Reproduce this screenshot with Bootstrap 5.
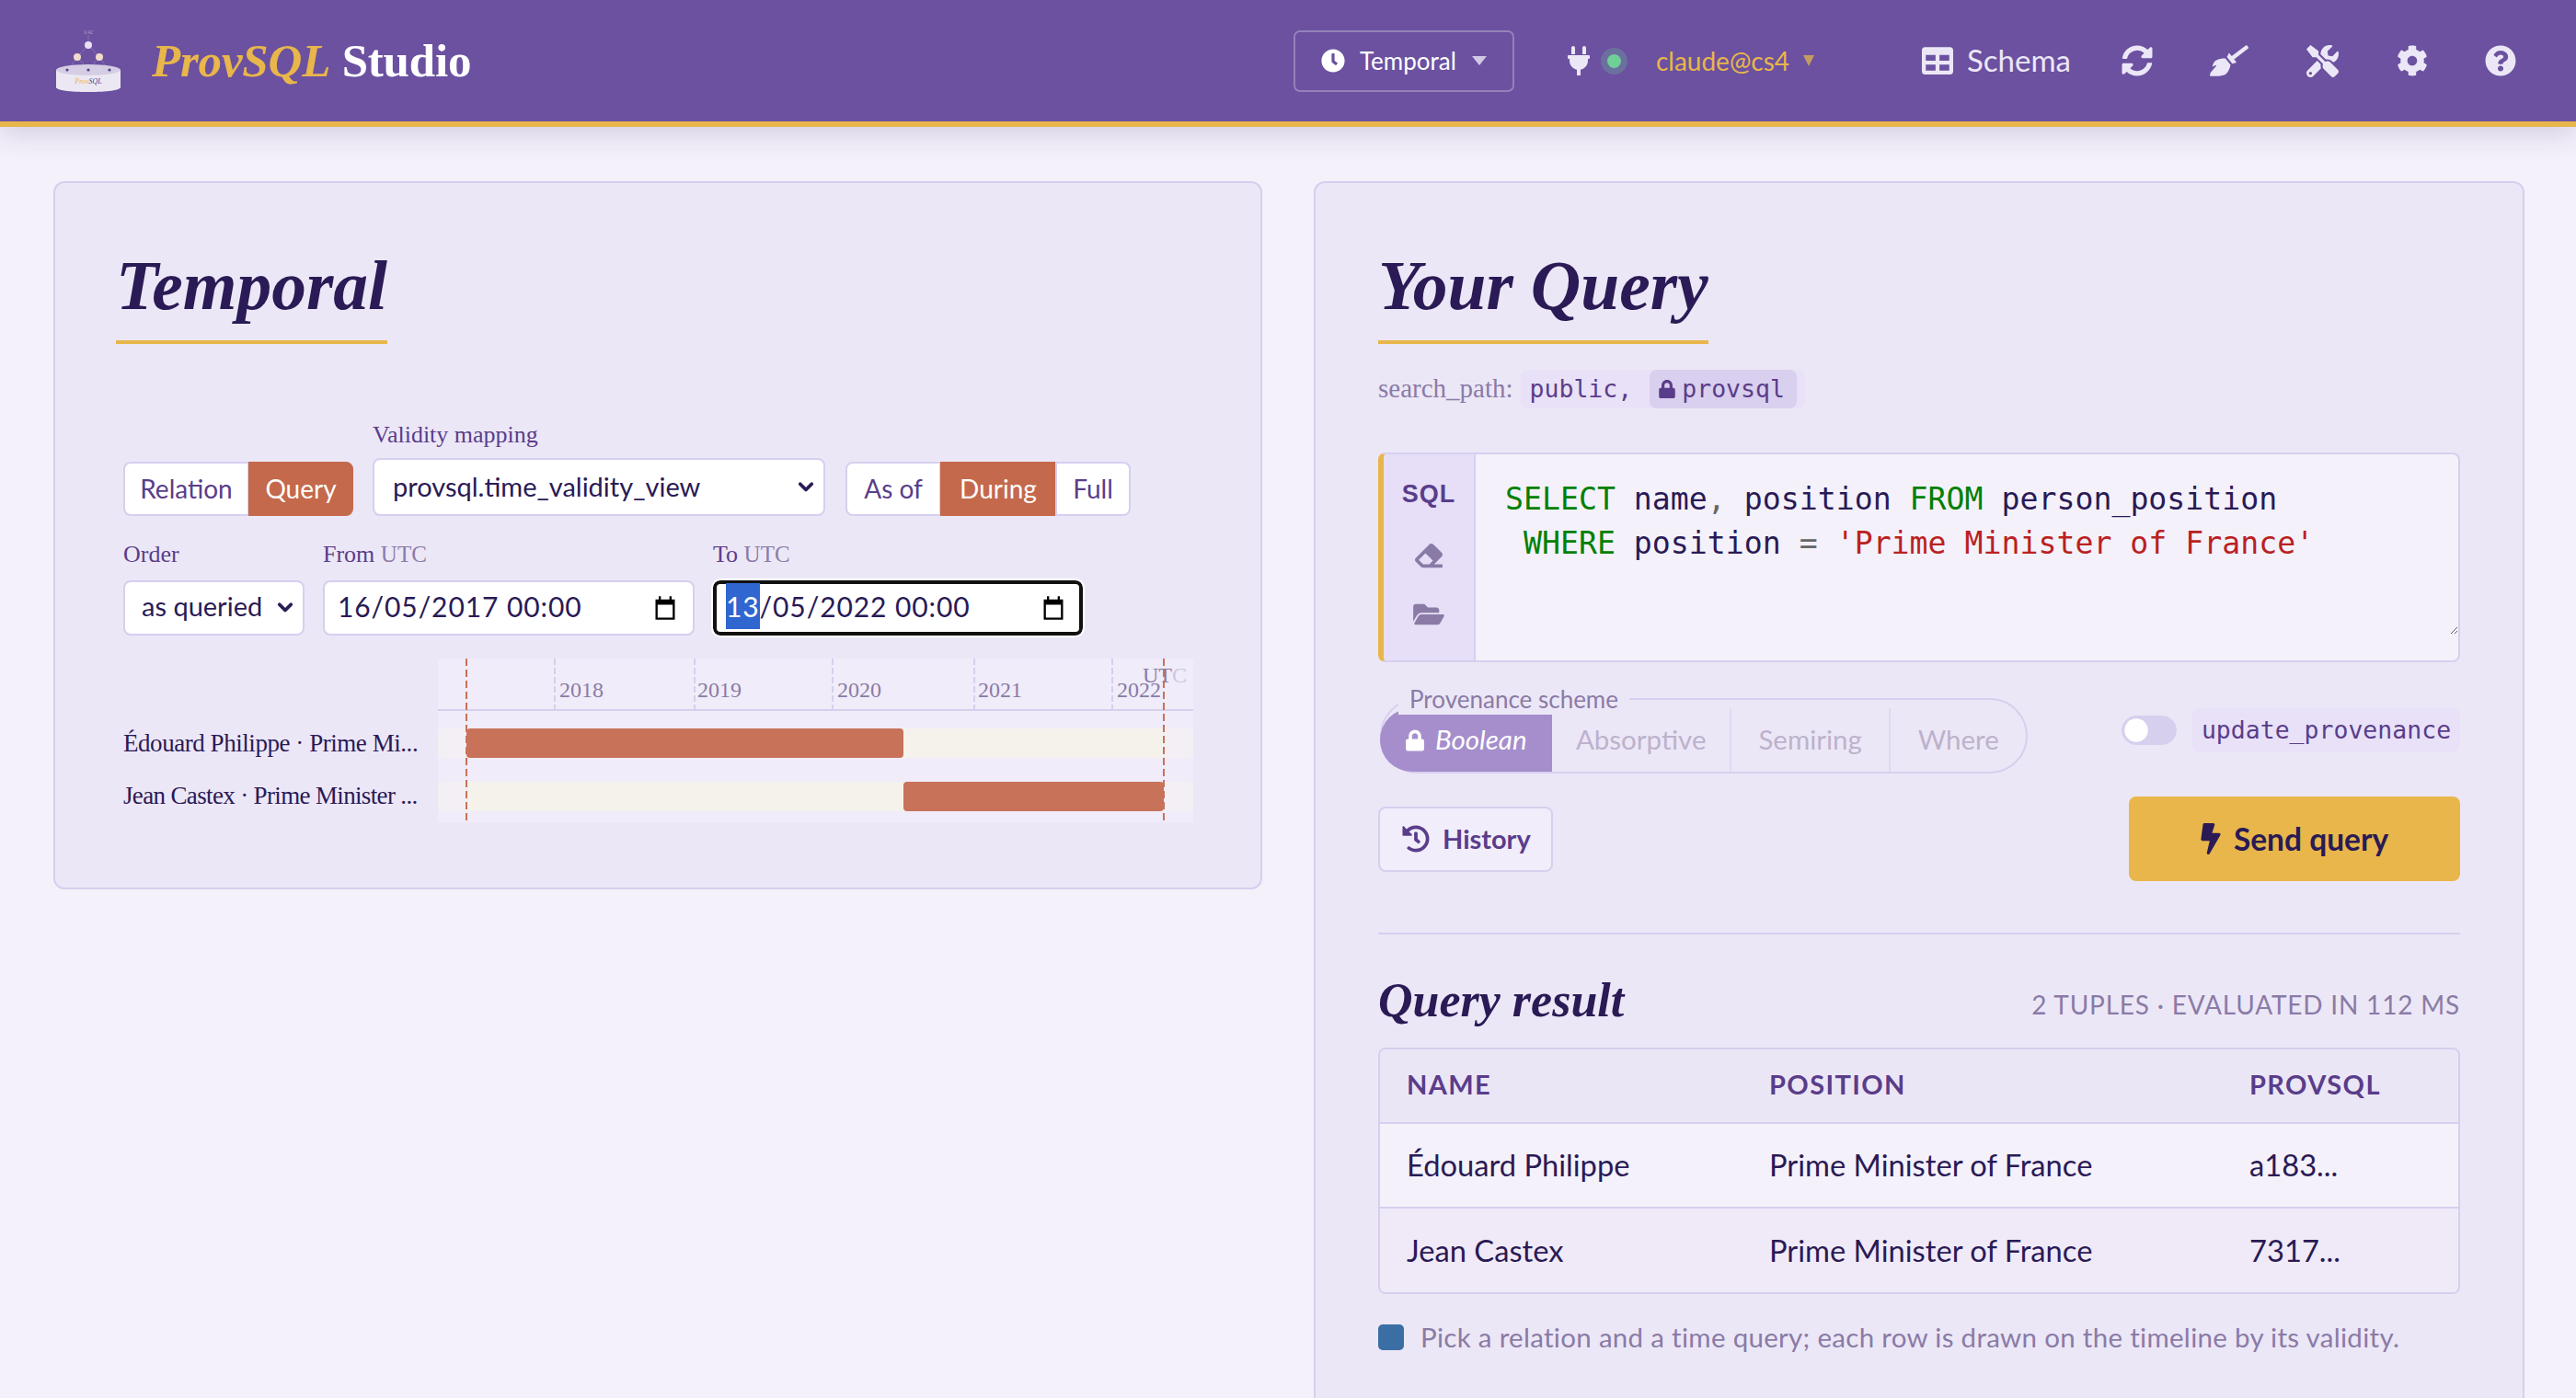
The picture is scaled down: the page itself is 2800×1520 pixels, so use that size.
<!DOCTYPE html>
<html lang="en">
<head>
    <meta charset="UTF-8">
    <title>ProvSQL Studio</title>
    <link href="https://cdn.jsdelivr.net/npm/bootstrap@5.3.3/dist/css/bootstrap.min.css" rel="stylesheet">
    <style>
        :root { --ink: #2a1a55; --accent: #5a3d8a; --muted: #8a7ba6; --line: #d6cfee; --gold: #e8b64a; --terra: #c4694b; --panel: #ece7f7; }
        html, body { height: 100%; }
        body { background: #f4f1fb; color: var(--ink); font-family: Lato, "Liberation Sans", sans-serif; font-size: 32px; overflow: hidden; }
        .code-font { font-family: "DejaVu Sans Mono", monospace; }
        .ico { fill: currentColor; display: block; flex: none; }

        .topbar { height: 138px; background: #6b51a0; border-bottom: 6px solid var(--gold); box-shadow: 0 6px 30px rgba(42,26,85,.18); padding: 0 65px 0 61px; flex-wrap: nowrap; color: #ece7f7; position: relative; }
        .brand-name { font-family: "Liberation Serif", serif; font-size: 51px; font-weight: 700; color: #fff; margin: 0 0 0 34px; line-height: 1; letter-spacing: -.2px; }
        .brand-name em { color: var(--gold); }
        .mode-btn { width: 240px; height: 67px; border: 2px solid rgba(255,255,255,.28); border-radius: 7px; color: #fff; font-size: 26px; padding: 0 28px; gap: 16px; }
        .mode-btn:hover, .mode-btn:active { color: #fff; border-color: rgba(255,255,255,.28); }
        .caret-down { width: 0; height: 0; border-left: 8px solid transparent; border-right: 8px solid transparent; border-top: 10px solid rgba(236,231,247,.8); margin-left: auto; }
        .conn { margin-left: 58px; }
        .live-dot { width: 15px; height: 15px; border-radius: 50%; background: #6fcf97; box-shadow: 0 0 0 7px rgba(111,207,151,.25); margin: 0 0 0 19px; }
        .who { color: var(--gold); font-size: 28px; margin-left: 38px; }
        .who + .caret-down { border-left-width: 6px; border-right-width: 6px; border-top: 12px solid #c49c5f; margin-left: 15px; }
        .schema-link { margin-left: 117px; font-size: 33px; gap: 15px; color: #ece7f7; }
        .tool-ico { color: #ece7f7; }
        .t1 { margin-left: 55px; } .t2 { margin-left: 62px; } .t3 { margin-left: 63px; } .t4 { margin-left: 63px; } .t5 { margin-left: 62px; }

        .workspace { display: grid; grid-template-columns: 1314px 1316px; gap: 56px; padding: 59px 0 0 58px; align-items: start; height: 1382px; overflow: hidden; }
        .panel-box { background: var(--panel); border: 2px solid var(--line); border-radius: 12px; padding: 0 68px; }
        .panel-left { height: 770px; padding-left: 66px; }
        .panel-right { height: 1400px; }
        .panel-title { display: block; width: fit-content; font-family: "Liberation Serif", serif; font-style: italic; font-weight: 700; font-size: 75.5px; line-height: 82px; margin: 71px 0 0; padding: 0 0 18px; border-bottom: 4px solid var(--gold); color: var(--ink); }

        .field-row { display: flex; align-items: flex-end; gap: 20px; margin-left: 8px; }
        .field-row.first { margin-top: 84px; }
        .field-row.second { margin-top: 27px; }
        .field-label { display: block; font-family: "Liberation Serif", serif; font-size: 26px; line-height: 30px; color: var(--accent); margin: 0 0 10px; }
        .field-label.low { margin-bottom: 13px; }
        .field-label span { color: var(--muted); font-size: 25px; }
        .seg-group .btn { background: #fff; border: 2px solid var(--line); color: var(--accent); font-size: 28px; height: 59px; padding: 0; line-height: 55px; white-space: nowrap; --bs-btn-border-radius: 8px; }
        .seg-group .btn.on { background: var(--terra); border-color: var(--terra); color: #fff; }
        .seg-a { width: 251px; } .seg-b { width: 312px; margin-left: 2px; }
        .seg-a .b1 { width: 137px; flex: none; } .seg-a .b2 { width: 114px; flex: none; }
        .seg-b .b1 { width: 104px; flex: none; } .seg-b .b2 { width: 126px; flex: none; } .seg-b .b3 { width: 82px; flex: none; }
        .pick { border: 2px solid var(--line); border-radius: 8px; color: var(--ink); font-size: 29px; height: 63px; padding: 0 40px 2px 20px; background-size: 28px 20px; background-position: right 5px center; --bs-form-select-bg-img: url("data:image/svg+xml,%3csvg xmlns='http://www.w3.org/2000/svg' viewBox='0 0 16 16'%3e%3cpath fill='none' stroke='%232a1a55' stroke-linecap='round' stroke-linejoin='round' stroke-width='3' d='m3 5 5 5 5-5'/%3e%3c/svg%3e"); }
        .pick-view { width: 492px; }
        .pick-order { width: 197px; height: 60px; padding: 0 30px 4px 18px; }
        .date-box { height: 60px; background: #fff; border: 2px solid var(--line); border-radius: 8px; color: var(--ink); font-size: 30px; padding: 0 16px 0 14px; display: flex; align-items: center; justify-content: space-between; letter-spacing: .9px; }
        .date-box span { margin-bottom: 4px; }
        .date-from { width: 404px; }
        .date-to { width: 402px; border: 4px solid #111; outline: 2px solid #fff; padding: 0 14px 0 10px; }
        .date-to mark { background: #2f66cf; color: #fff; padding: 7px 0; }
        .timeline { display: block; margin: 25px 0 0 8px; }

        .path-row { margin-top: 28px; height: 42px; }
        .path-label { font-family: "Liberation Serif", serif; font-size: 29px; color: var(--muted); margin-right: 8px; }
        .path-chip { height: 42px; width: 309px; background: #e8e1f8; border-radius: 8px; font-size: 26.5px; color: var(--accent); padding: 0 9px 0 10px; }
        .path-lock { background: #d9cfee; border-radius: 8px; height: 42px; padding: 0 12px 0 10px; gap: 7px; margin-left: 19px; width: 162px; }
        .editor { margin-top: 48px; height: 228px; border: 2px solid var(--line); border-left: 6px solid var(--gold); border-radius: 8px; overflow: hidden; background: #f4f1fb; }
        .editor-side { width: 100px; flex: none; background: #e6dff7; border-right: 2px solid var(--line); color: var(--muted); padding-top: 25px; gap: 34px; }
        .editor-side b { color: var(--accent); font-size: 27px; line-height: 36px; letter-spacing: 1px; font-family: "Liberation Sans", sans-serif; }
        .editor-code { flex: 1; align-self: flex-start; height: 196px; margin: 0; padding: 25px 0 0 32px; font-family: "DejaVu Sans Mono", monospace; font-size: 33.2px; line-height: 48px; color: var(--ink); resize: vertical; overflow: auto; }
        .kw { color: #008000; } .str { color: #ba2121; } .op { color: #666; }

        .scheme-row { margin-top: 39px; }
        .scheme-box { position: relative; width: 704px; height: 82px; border: 2px solid var(--line); border-radius: 41px; padding-top: 9px; margin: 0 0 0 2px; }
        .scheme-legend { position: absolute; left: 18px; top: -18px; float: none; width: auto; background: var(--panel); font-size: 26px; line-height: 34px; color: var(--muted); padding: 0 12px; margin: 0; }
        .scheme-opts { height: 69px; margin: 0 0 -2px -2px; }
        .scheme-opt { height: 69px; border-right: 2px solid #e0d9f1; color: #bdb2cc; font-size: 29.5px; gap: 12px; }
        .scheme-opt.picked { background: #a58ecb; color: #fff; font-style: italic; border: 0; border-radius: 38px 0 0 38px; width: 188px; }
        .w2 { width: 195px; } .w3 { width: 174px; } .w4 { width: 147px; border: 0; }
        .prov-flag { margin-top: 11px; height: 48px; }
        .prov-switch { padding: 0; margin: 0 17px 0 0; min-height: 0; height: 32px; }
        .form-switch .prov-toggle { width: 60px; height: 32px; margin: 0; background-color: var(--line); border-color: var(--line); background-image: url("data:image/svg+xml,%3csvg xmlns='http://www.w3.org/2000/svg' viewBox='-4 -4 8 8'%3e%3ccircle r='3.4' fill='%23fff'/%3e%3c/svg%3e"); }
        .prov-chip { background: #e8e1f8; color: var(--accent); border-radius: 8px; height: 48px; width: 291px; font-size: 26.5px; line-height: 48px; text-align: center; }

        .action-row { margin-top: 25px; height: 92px; }
        .history-btn { height: 71px; width: 190px; border: 2px solid var(--line); border-radius: 8px; color: var(--accent); font-weight: 700; font-size: 29px; gap: 14px; padding: 0 0 0 24px; justify-content: flex-start; background: #f1edfb; }
        .send-btn { width: 360px; height: 92px; background: var(--gold); border: 0; border-radius: 8px; color: var(--ink); font-weight: 700; font-size: 33.5px; gap: 14px; justify-content: center; }
        .soft-rule { margin: 56px 0 0; border-top: 2px solid var(--line); opacity: 1; }
        .result-head { margin-top: 40px; margin-bottom: 19px; height: 64px; }
        .result-title { font-family: "Liberation Serif", serif; font-style: italic; font-weight: 700; font-size: 52px; line-height: 64px; margin: 0; color: var(--ink); }
        .result-meta { color: var(--muted); font-size: 28px; letter-spacing: .8px; padding-top: 8px; }
        .result-wrap { border: 2px solid var(--line); border-radius: 8px; overflow: hidden; }
        .result-table { table-layout: fixed; margin: 0; font-size: 32.7px; --bs-table-bg: transparent; --bs-table-color: var(--ink); }
        .result-table th { height: 80px; vertical-align: middle; padding: 0 0 3px 29px; color: var(--accent); font-size: 29px; font-weight: 700; letter-spacing: 1.4px; text-transform: uppercase; background: #ebe6f6; border-bottom: 2px solid var(--line); }
        .result-table td { height: 92px; vertical-align: middle; padding: 0 0 0 29px; border-bottom: 2px solid var(--line); }
        .result-table tr:last-child td { border-bottom: 0; }
        .row-a td { background: #f4f1fb; } .row-b td { background: #f0eaf8; }
        .c1 { width: 394px; } .c2 { width: 522px; }
        .note-row { margin-top: 25px; gap: 18px; color: var(--muted); font-size: 29.5px; letter-spacing: .3px; }
        .note-dot { width: 28px; height: 28px; background: #3a6ea5; border-radius: 5px; }
    </style>
</head>
<body>

<svg class="d-none">
    <symbol id="i-clock" viewBox="0 0 512 512"><path d="M256,8C119,8,8,119,8,256S119,504,256,504,504,393,504,256,393,8,256,8Zm92.49,313h0l-20,25a16,16,0,0,1-22.49,2.5h0l-67-49.72a40,40,0,0,1-15-31.23V112a16,16,0,0,1,16-16h32a16,16,0,0,1,16,16V256l58,42.5A16,16,0,0,1,348.49,321Z"/></symbol>
    <symbol id="i-lock" viewBox="0 0 448 512"><path d="M400 224h-24v-72C376 68.2 307.8 0 224 0S72 68.2 72 152v72H48c-26.5 0-48 21.5-48 48v192c0 26.5 21.5 48 48 48h352c26.5 0 48-21.5 48-48V272c0-26.5-21.5-48-48-48zm-104 0H152v-72c0-39.7 32.3-72 72-72s72 32.3 72 72v72z"/></symbol>
    <symbol id="i-bolt" viewBox="0 0 320 512"><path d="M296 160H180.6l42.6-129.8C227.2 15 215.7 0 200 0H56C44 0 33.8 8.9 32.2 20.8l-32 240C-1.7 275.2 9.5 288 24 288h118.7L96.6 482.5c-3.6 15.2 8 29.5 23.3 29.5 8.4 0 16.4-4.4 20.8-12l176-304c9.3-15.9-2.2-36-20.7-36z"/></symbol>
    <symbol id="i-help" viewBox="0 0 512 512"><path d="M504 256c0 136.997-111.043 248-248 248S8 392.997 8 256C8 119.083 119.043 8 256 8s248 111.083 248 248zM262.655 90c-54.497 0-89.255 22.957-116.549 63.758-3.536 5.286-2.353 12.415 2.715 16.258l34.699 26.31c5.205 3.947 12.621 3.008 16.665-2.122 17.864-22.658 30.113-35.797 57.303-35.797 20.429 0 45.698 13.148 45.698 32.958 0 14.976-12.363 22.667-32.534 33.976C247.128 238.528 216 254.941 216 296v4c0 6.627 5.373 12 12 12h56c6.627 0 12-5.373 12-12v-1.333c0-28.462 83.186-29.647 83.186-106.667 0-58.002-60.165-102-116.531-102zM256 338c-25.365 0-46 20.635-46 46 0 25.364 20.635 46 46 46s46-20.636 46-46c0-25.365-20.635-46-46-46z"/></symbol>
    <symbol id="i-cog" viewBox="0 0 512 512"><path d="M487.4 315.7l-42.6-24.6c4.3-23.2 4.3-47 0-70.2l42.6-24.6c4.9-2.8 7.1-8.6 5.5-14-11.1-35.6-30-67.8-54.7-94.6-3.8-4.1-10-5.1-14.8-2.3L380.8 110c-17.9-15.4-38.5-27.3-60.8-35.1V25.8c0-5.6-3.9-10.5-9.4-11.7-36.7-8.2-74.3-7.8-109.2 0-5.5 1.2-9.4 6.1-9.4 11.7V75c-22.2 7.9-42.8 19.8-60.8 35.1L88.7 85.5c-4.9-2.8-11-1.9-14.8 2.3-24.7 26.7-43.6 58.9-54.7 94.6-1.7 5.4.6 11.2 5.5 14L67.3 221c-4.3 23.2-4.3 47 0 70.2l-42.6 24.6c-4.9 2.8-7.1 8.6-5.5 14 11.1 35.6 30 67.8 54.7 94.6 3.8 4.1 10 5.1 14.8 2.3l42.6-24.6c17.9 15.4 38.5 27.3 60.8 35.1v49.2c0 5.6 3.9 10.5 9.4 11.7 36.7 8.2 74.3 7.8 109.2 0 5.5-1.2 9.4-6.1 9.4-11.7v-49.2c22.2-7.9 42.8-19.8 60.8-35.1l42.6 24.6c4.9 2.8 11 1.9 14.8-2.3 24.7-26.7 43.6-58.9 54.7-94.6 1.5-5.5-.7-11.3-5.6-14.1zM256 336c-44.1 0-80-35.9-80-80s35.9-80 80-80 80 35.9 80 80-35.9 80-80 80z"/></symbol>
    <symbol id="i-sync" viewBox="0 0 512 512"><path d="M370.72 133.28C339.458 104.008 298.888 87.962 255.848 88c-77.458.068-144.328 53.178-162.791 126.85-1.344 5.363-6.122 9.15-11.651 9.15H24.103c-7.498 0-13.194-6.807-11.807-14.176C33.933 94.924 134.813 8 256 8c66.448 0 126.791 26.136 171.315 68.685L463.03 40.97C478.149 25.851 504 36.559 504 57.941V192c0 13.255-10.745 24-24 24H345.941c-21.382 0-32.09-25.851-16.971-40.971l41.75-41.749zM32 296h134.059c21.382 0 32.09 25.851 16.971 40.971l-41.75 41.75c31.262 29.273 71.835 45.319 114.876 45.28 77.418-.07 144.315-53.144 162.787-126.849 1.344-5.363 6.122-9.15 11.651-9.15h57.304c7.498 0 13.194 6.807 11.807 14.176C478.067 417.076 377.187 504 256 504c-66.448 0-126.791-26.136-171.315-68.685L48.97 471.03C33.851 486.149 8 475.441 8 454.059V320c0-13.255 10.745-24 24-24z"/></symbol>
    <symbol id="i-table" viewBox="0 0 512 512"><path d="M464 32H48C21.49 32 0 53.49 0 80v352c0 26.51 21.49 48 48 48h416c26.51 0 48-21.49 48-48V80c0-26.51-21.49-48-48-48zM224 416H64v-96h160v96zm0-160H64v-96h160v96zm224 160H288v-96h160v96zm0-160H288v-96h160v96z"/></symbol>
    <symbol id="i-plug" viewBox="0 0 384 512"><path d="M256 144V32c0-17.673 14.327-32 32-32s32 14.327 32 32v112h-64zm112 16H16c-8.837 0-16 7.163-16 16v32c0 8.837 7.163 16 16 16h16v32c0 77.406 54.969 141.971 128 156.796V512h64v-99.204c73.031-14.825 128-79.39 128-156.796v-32h16c8.837 0 16-7.163 16-16v-32c0-8.837-7.163-16-16-16zM128 144V32c0-17.673-14.327-32-32-32S64 14.327 64 32v112h64z"/></symbol>
    <symbol id="i-history" viewBox="0 0 512 512"><path d="M504 255.531c.253 136.64-111.18 248.372-247.82 248.468-59.015.042-113.223-20.53-155.822-54.911-11.077-8.94-11.905-25.541-1.839-35.607l11.267-11.267c8.609-8.609 22.353-9.551 31.891-1.984C173.062 425.135 212.781 440 256 440c101.705 0 184-82.311 184-184 0-101.705-82.311-184-184-184-48.814 0-93.149 18.969-126.068 49.932l50.754 50.754c10.08 10.08 2.941 27.314-11.313 27.314H24c-8.837 0-16-7.163-16-16V38.627c0-14.254 17.234-21.393 27.314-11.314l49.372 49.372C129.209 34.136 189.552 8 256 8c136.81 0 247.747 110.78 248 247.531zm-180.912 78.784l9.823-12.63c8.138-10.463 6.253-25.542-4.21-33.679L288 256.349V152c0-13.255-10.745-24-24-24h-16c-13.255 0-24 10.745-24 24v135.651l65.409 50.874c10.463 8.137 25.541 6.253 33.679-4.21z"/></symbol>
    <symbol id="i-eraser" viewBox="0 0 512 512"><path d="M497.941 273.941c18.745-18.745 18.745-49.137 0-67.882l-160-160c-18.745-18.745-49.136-18.746-67.883 0l-256 256c-18.745 18.745-18.745 49.137 0 67.882l96 96A48.004 48.004 0 0 0 144 480h356c6.627 0 12-5.373 12-12v-40c0-6.627-5.373-12-12-12H355.883l142.058-142.059zm-302.627-62.627l137.373 137.373L265.373 416H150.628l-80-80 124.686-124.686z"/></symbol>
    <symbol id="i-folder" viewBox="0 0 576 512"><path d="M572.694 292.093L500.27 416.248A63.997 63.997 0 0 1 444.989 448H45.025c-18.523 0-30.064-20.093-20.731-36.093l72.424-124.155A64 64 0 0 1 152 256h399.964c18.523 0 30.064 20.093 20.73 36.093zM152 224h328v-48c0-26.51-21.49-48-48-48H272l-64-64H48C21.49 64 0 85.49 0 112v278.046l69.077-118.418C86.214 242.25 117.989 224 152 224z"/></symbol>
    <symbol id="i-tools" viewBox="0 0 512 512"><path d="M501.1 395.7L384 278.6c-23.1-23.1-57.6-27.6-85.4-13.9L192 158.1V96L64 0 0 64l96 128h62.1l106.6 106.6c-13.6 27.8-9.2 62.3 13.9 85.4l117.1 117.1c14.6 14.6 38.2 14.6 52.7 0l52.7-52.7c14.5-14.6 14.5-38.2 0-52.7zM331.7 225c28.3 0 54.9 11 74.9 31l19.4 19.4c15.8-6.9 30.8-16.5 43.8-29.5 37.1-37.1 49.7-89.3 37.9-136.7-2.2-9-13.5-12.1-20.1-5.5l-74.4 74.4-67.9-11.3L334 98.9l74.4-74.4c6.6-6.6 3.4-17.9-5.7-20.2-47.4-11.7-99.6.9-136.6 37.9-28.5 28.5-41.9 66.1-41.2 103.6l82.1 82.1c8.1-1.9 16.5-2.9 24.7-2.9zm-103.9 82l-56.7-56.7L18.7 402.8c-25 25-25 65.5 0 90.5s65.5 25 90.5 0l123.6-123.6c-7.6-19.9-9.9-41.6-5-62.7zM64 472c-13.2 0-24-10.8-24-24 0-13.3 10.7-24 24-24s24 10.7 24 24c0 13.2-10.7 24-24 24z"/></symbol>
    <symbol id="i-broom" viewBox="0 0 640 512"><path d="M256.47 216.77l86.73 109.18s-16.6 102.36-76.57 150.12C206.66 523.85 0 510.19 0 510.19s3.8-23.14 11-55.43l94.62-112.17c3.97-4.7-.87-11.62-6.65-9.5l-60.4 22.09c14.44-41.66 32.72-80.04 54.6-97.47 59.97-47.76 163.3-40.94 163.3-40.94zM636.53 31.03l-19.86-25c-5.49-6.9-15.52-8.05-22.41-2.56l-232.48 177.8-34.14-42.97c-5.09-6.41-15.14-5.21-18.59 2.21l-25.33 54.55 86.73 109.18 58.8-12.45c8-1.69 11.42-11.2 6.34-17.6l-34.09-42.92 232.48-177.8c6.89-5.48 8.04-15.53 2.55-22.44z"/></symbol>
    <symbol id="i-cal" viewBox="0 0 24 24"><path d="M6 1h2v3h8V1h2v3h3v19H3V4h3V1zM5 9v12h14V9H5z"/></symbol>
</svg>

<nav class="navbar topbar">
    <div class="d-flex align-items-center">
        <svg width="70" height="68" viewBox="0 0 70 68">
            <text x="35" y="5" font-size="5" text-anchor="middle" fill="#b59bc4" font-family="Liberation Sans">0.42</text>
            <path d="M35 6v11M35 17 23 30M35 17l12 13M23 30l-10 14M23 30l12 14M47 30 35 44M47 30l10 14" stroke="#8f79b8" stroke-width=".8" fill="none"/>
            <circle cx="35" cy="17" r="4" fill="#e6e0f2"/>
            <circle cx="23" cy="30" r="4" fill="#f3dccb"/>
            <circle cx="47" cy="30" r="4" fill="#f3dccb"/>
            <path d="M0 47v19c0 3 15 5 35 5s35-2 35-5V47z" transform="translate(0 -3)" fill="#ece8f3"/>
            <ellipse cx="35" cy="44" rx="35" ry="6" fill="#d4cde4"/>
            <circle cx="12" cy="44" r="1.6" fill="#5a3d8a"/><circle cx="35" cy="44" r="1.6" fill="#5a3d8a"/><circle cx="58" cy="44" r="1.6" fill="#5a3d8a"/>
            <text x="35" y="59" font-size="8" text-anchor="middle" font-style="italic" fill="#5a3d8a" font-family="Liberation Serif"><tspan fill="#e8b64a">Prov</tspan>SQL</text>
        </svg>
        <p class="brand-name"><em>ProvSQL</em> Studio</p>
    </div>
    <div class="d-flex align-items-center ms-auto">
        <div class="dropdown">
            <button class="btn mode-btn d-flex align-items-center" type="button">
                <svg class="ico" width="26" height="26"><use href="#i-clock"/></svg>
                <span>Temporal</span>
                <span class="caret-down"></span>
            </button>
        </div>
        <div class="d-flex align-items-center conn">
            <svg class="ico" width="24" height="32"><use href="#i-plug"/></svg>
            <span class="live-dot"></span>
            <span class="who">claude@cs4</span>
            <span class="caret-down"></span>
        </div>
        <div class="d-flex align-items-center schema-link">
            <svg class="ico" width="34" height="34"><use href="#i-table"/></svg>
            <span>Schema</span>
        </div>
        <svg class="ico tool-ico t1" width="34" height="34"><use href="#i-sync"/></svg>
        <svg class="ico tool-ico t2" width="42" height="34"><use href="#i-broom"/></svg>
        <svg class="ico tool-ico t3" width="35" height="35"><use href="#i-tools"/></svg>
        <svg class="ico tool-ico t4" width="34" height="34"><use href="#i-cog"/></svg>
        <svg class="ico tool-ico t5" width="34" height="34"><use href="#i-help"/></svg>
    </div>
</nav>

<main class="workspace">
    <section class="panel-box panel-left">
        <h2 class="panel-title">Temporal</h2>

        <div class="field-row first">
            <div class="btn-group seg-group seg-a">
                <button class="btn b1" type="button">Relation</button>
                <button class="btn b2 on" type="button">Query</button>
            </div>
            <div>
                <label class="field-label">Validity mapping</label>
                <select class="form-select pick pick-view"><option>provsql.time_validity_view</option></select>
            </div>
            <div class="btn-group seg-group seg-b">
                <button class="btn b1" type="button">As of</button>
                <button class="btn b2 on" type="button">During</button>
                <button class="btn b3" type="button">Full</button>
            </div>
        </div>

        <div class="field-row second">
            <div>
                <label class="field-label low">Order</label>
                <select class="form-select pick pick-order"><option>as queried</option></select>
            </div>
            <div>
                <label class="field-label low">From <span>UTC</span></label>
                <div class="date-box date-from">
                    <span>16/05/2017 00:00</span>
                    <svg class="ico text-black" width="28" height="28"><use href="#i-cal"/></svg>
                </div>
            </div>
            <div>
                <label class="field-label low">To <span>UTC</span></label>
                <div class="date-box date-to">
                    <span><mark>13</mark>/05/2022 00:00</span>
                    <svg class="ico text-black" width="28" height="28"><use href="#i-cal"/></svg>
                </div>
            </div>
        </div>

        <svg class="timeline" width="1166" height="178" viewBox="0 0 1166 178" font-family="Liberation Serif, serif">
            <rect x="342" width="821" height="178" fill="#f0ecf9"/>
            <rect x="342" y="55" width="821" height="2" fill="#d6cfee"/>
            <g stroke="#d6cfee" stroke-width="2" stroke-dasharray="7 3">
                <path d="M469 0v55M621 0v55M771 0v55M925 0v55M1075 0v55"/>
            </g>
            <g font-size="24" fill="#8a7ba6">
                <text x="474" y="42">2018</text>
                <text x="624" y="42">2019</text>
                <text x="776" y="42">2020</text>
                <text x="929" y="42">2021</text>
                <text x="1080" y="42">2022</text>
                <text x="1108" y="26">UT<tspan fill="#cfc7df">C</tspan></text>
            </g>
            <g font-size="27" fill="#2a1a55">
                <text x="0" y="101" letter-spacing="-.45">Édouard Philippe · Prime Mi...</text>
                <text x="0" y="158" letter-spacing="-.65">Jean Castex · Prime Minister ...</text>
            </g>
            <rect x="342" y="76" width="821" height="32" rx="4" fill="#f3eff5"/>
            <rect x="342" y="134" width="821" height="32" rx="4" fill="#f3eff5"/>
            <rect x="373" y="76" width="758" height="32" fill="#f5f2ec"/>
            <rect x="373" y="134" width="758" height="32" fill="#f5f2ec"/>
            <rect x="373" y="76" width="475" height="32" rx="4" fill="#c8725a"/>
            <rect x="848" y="134" width="283" height="32" rx="4" fill="#c8725a"/>
            <path d="M373 0v178M1131 0v178" stroke="#c8725a" stroke-width="2" stroke-dasharray="8 4"/>
        </svg>
    </section>

    <section class="panel-box panel-right">
        <h2 class="panel-title">Your Query</h2>

        <div class="d-flex align-items-center path-row">
            <span class="path-label">search_path:</span>
            <span class="d-flex align-items-center code-font path-chip">
                <span>public,</span>
                <span class="d-flex align-items-center path-lock">
                    <svg class="ico" width="18" height="20"><use href="#i-lock"/></svg>
                    <span>provsql</span>
                </span>
            </span>
        </div>

        <div class="d-flex editor">
            <div class="d-flex flex-column align-items-center editor-side">
                <b>SQL</b>
                <svg class="ico" width="30" height="30"><use href="#i-eraser"/></svg>
                <svg class="ico" width="36" height="30"><use href="#i-folder"/></svg>
            </div>
            <pre class="editor-code"><span class="kw">SELECT</span> name<span class="op">,</span> position <span class="kw">FROM</span> person_position
 <span class="kw">WHERE</span> position <span class="op">=</span> <span class="str">'Prime Minister of France'</span></pre>
        </div>

        <div class="d-flex justify-content-between align-items-start scheme-row">
            <fieldset class="scheme-box">
                <legend class="scheme-legend">Provenance scheme</legend>
                <div class="d-flex scheme-opts">
                    <div class="d-flex align-items-center justify-content-center scheme-opt picked">
                        <svg class="ico" width="20" height="24"><use href="#i-lock"/></svg>
                        <span>Boolean</span>
                    </div>
                    <div class="d-flex align-items-center justify-content-center scheme-opt w2">Absorptive</div>
                    <div class="d-flex align-items-center justify-content-center scheme-opt w3">Semiring</div>
                    <div class="d-flex align-items-center justify-content-center scheme-opt w4">Where</div>
                </div>
            </fieldset>
            <div class="d-flex align-items-center prov-flag">
                <div class="form-check form-switch prov-switch">
                    <input class="form-check-input prov-toggle" type="checkbox" role="switch" aria-label="update_provenance">
                </div>
                <span class="code-font prov-chip">update_provenance</span>
            </div>
        </div>

        <div class="d-flex justify-content-between align-items-center action-row">
            <button class="btn d-flex align-items-center history-btn" type="button">
                <svg class="ico" width="30" height="30"><use href="#i-history"/></svg>
                <span>History</span>
            </button>
            <button class="btn d-flex align-items-center send-btn" type="button">
                <svg class="ico" width="22" height="34"><use href="#i-bolt"/></svg>
                <span>Send query</span>
            </button>
        </div>

        <hr class="soft-rule">

        <div class="d-flex justify-content-between align-items-center result-head">
            <h3 class="result-title">Query result</h3>
            <span class="result-meta">2 TUPLES · EVALUATED IN 112 MS</span>
        </div>

        <div class="result-wrap">
            <table class="table result-table">
                <thead>
                    <tr><th class="c1">Name</th><th class="c2">Position</th><th>Provsql</th></tr>
                </thead>
                <tbody>
                    <tr class="row-a"><td>Édouard Philippe</td><td>Prime Minister of France</td><td>a183...</td></tr>
                    <tr class="row-b"><td>Jean Castex</td><td>Prime Minister of France</td><td>7317...</td></tr>
                </tbody>
            </table>
        </div>

        <div class="d-flex align-items-center note-row">
            <span class="note-dot"></span>
            <span>Pick a relation and a time query; each row is drawn on the timeline by its validity.</span>
        </div>
    </section>
</main>

<script src="https://cdn.jsdelivr.net/npm/bootstrap@5.3.3/dist/js/bootstrap.bundle.min.js"></script>
</body>
</html>
